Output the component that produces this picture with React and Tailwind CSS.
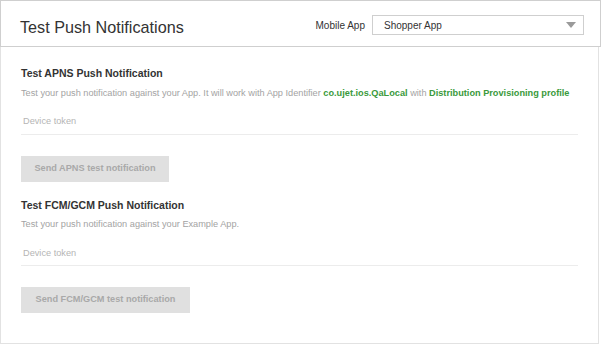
import React from "react";

const font = { fontFamily: '"Liberation Sans", Arial, sans-serif' };

const Section = ({ title, children, buttonLabel, buttonWidth, className }) => {
  return (
    <div className={className}>
      <h3 className="text-[10.5px] leading-[14px] font-bold text-[#333]">{title}</h3>
      <p className="mt-[6.5px] text-[9.2px] leading-[12px] text-[#a3a3a3] whitespace-nowrap">
        {children}
      </p>
      <input
        type="text"
        placeholder="Device token"
        className="mt-[13px] block h-[23px] w-[557px] border-b border-[#ececec] pl-[2px] pb-[3px] text-[9.2px] text-[#333] outline-none placeholder:text-[#b5b5b5]"
      />
      <button
        className={`mt-[21px] block h-[26px] ${buttonWidth} bg-[#e0e0e0] text-[9.2px] font-bold text-[#a9a9a9]`}
      >
        {buttonLabel}
      </button>
    </div>
  );
};

export default function App() {
  return (
    <div className="w-[601px] h-[345px] bg-white" style={font}>
      {/* header */}
      <div className="flex h-[47px] w-[601px] items-start justify-between border border-[#cfcfcf]">
        <h1 className="pl-[19px] pt-[16px] text-[16.2px] leading-[20px] text-[#333]">
          Test Push Notifications
        </h1>
        <div className="mt-[14px] mr-[16px] flex h-[20px] items-center gap-[7px]">
          <span className="text-[10px] text-[#333]">Mobile App</span>
          <div className="flex h-[20px] w-[212px] items-center justify-between border border-[#cfcfcf] pl-[11px] pr-[7px]">
            <span className="text-[10px] text-[#333]">Shopper App</span>
            <svg width="10" height="6" viewBox="0 0 10 6">
              <path d="M0 0 L10 0 L5 6 Z" fill="#9a9a9a" />
            </svg>
          </div>
        </div>
      </div>

      {/* body */}
      <div className="h-[297px] w-[599px] border-x border-b border-[#e2e2e2] pl-[20px] pt-[19px]">
        <Section
          title="Test APNS Push Notification"
          buttonLabel="Send APNS test notification"
          buttonWidth="w-[148px]"
        >
          Test your push notification against your App. It will work with App Identifier{" "}
          <span className="font-bold text-[#3a9a3c]">co.ujet.ios.QaLocal</span> with{" "}
          <span className="font-bold text-[#3a9a3c]">Distribution Provisioning profile</span>
        </Section>
        <Section
          className="mt-[16px]"
          title="Test FCM/GCM Push Notification"
          buttonLabel="Send FCM/GCM test notification"
          buttonWidth="w-[169px]"
        >
          Test your push notification against your Example App.
        </Section>
      </div>
    </div>
  );
}
